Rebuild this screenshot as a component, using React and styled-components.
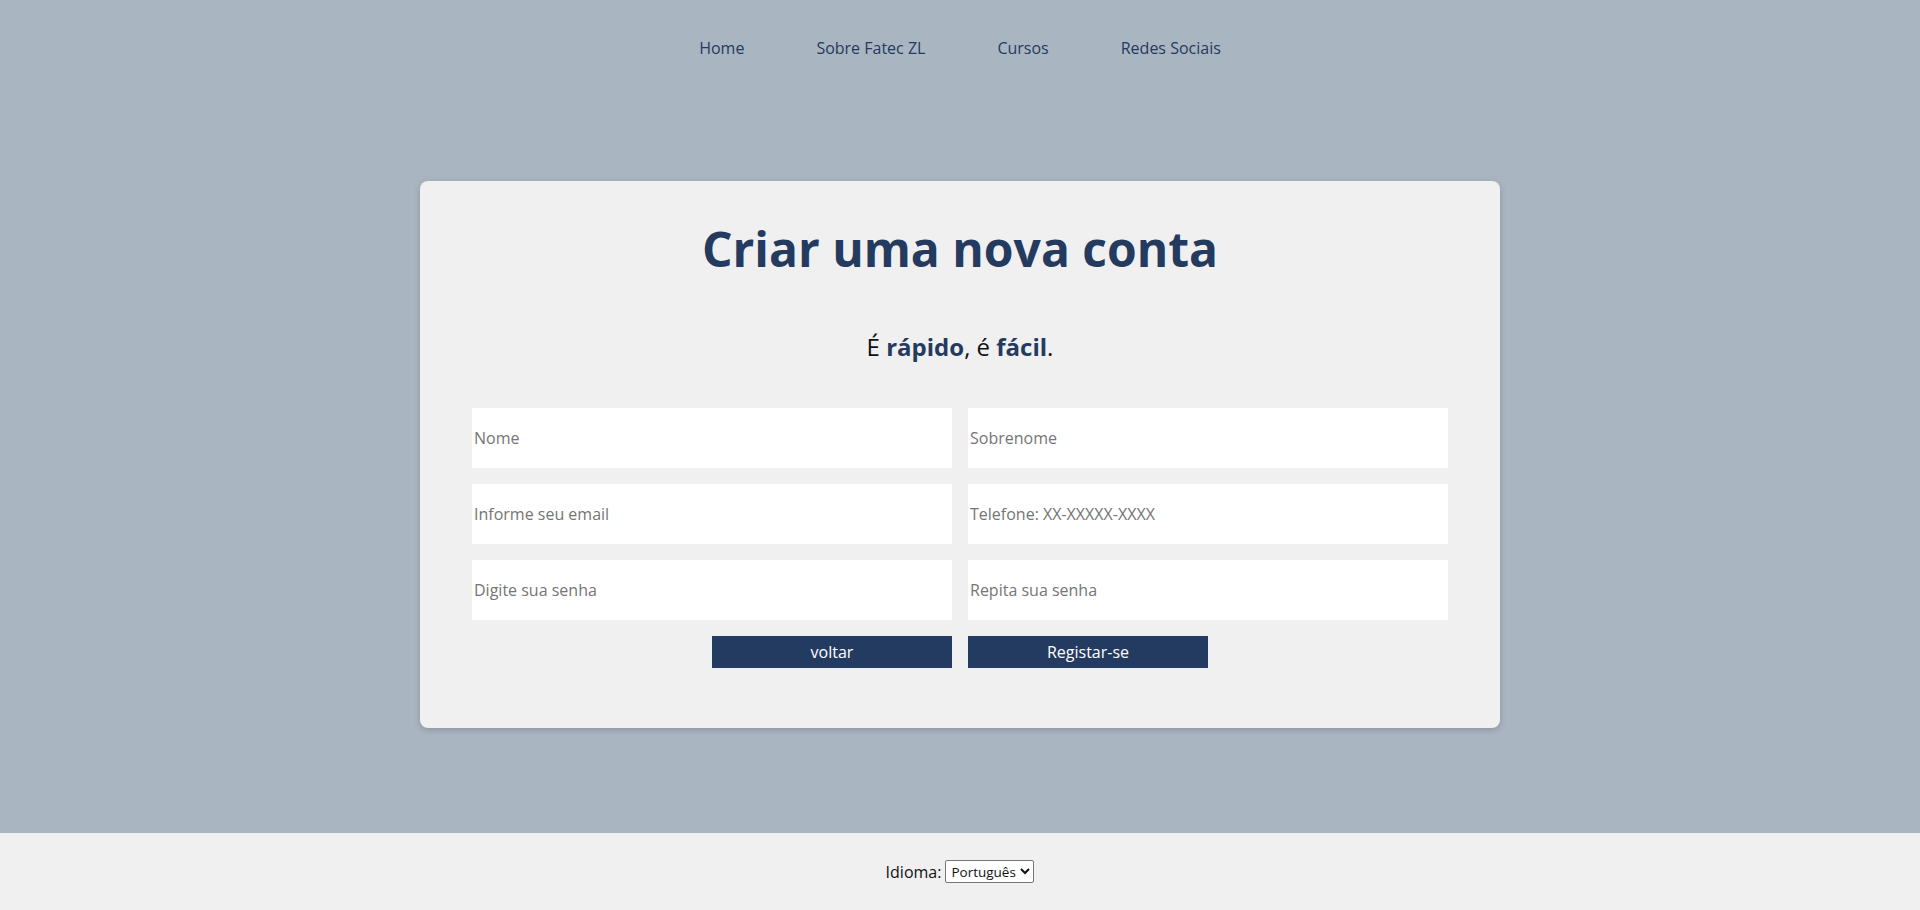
import React from "react";
import styled, { createGlobalStyle } from "styled-components";

const Global = createGlobalStyle`
  html, body { margin: 0; padding: 0; }
  body {
    background: #aab5c2;
    font-family: "Open Sans", "Noto Sans", sans-serif;
  }
  * { box-sizing: border-box; }
`;

const Page = styled.div`
  min-height: 910px;
  display: flex;
  flex-direction: column;
`;

const Header = styled.header`
  height: 96px;
  display: flex;
  align-items: center;
  justify-content: center;
`;

const Nav = styled.nav`
  display: flex;
  gap: 72px;
`;

const NavLink = styled.a`
  color: #243a5e;
  font-size: 16px;
  text-decoration: none;
  cursor: pointer;
`;

const Main = styled.main`
  display: flex;
  justify-content: center;
  padding-top: 85px;
`;

const Card = styled.section`
  width: 1080px;
  background: #f0f0f0;
  border-radius: 8px;
  box-shadow: 0 2px 6px rgba(0, 0, 0, 0.18);
  padding: 37px 52px 60px;
  display: flex;
  flex-direction: column;
  align-items: center;
`;

const Title = styled.h1`
  margin: 0;
  color: #243a5e;
  font-size: 48px;
  font-weight: 700;
  line-height: 1.3;
`;

const Subtitle = styled.p`
  margin: 51px 0 0;
  color: #111;
  font-size: 24px;
  line-height: 1.3;
  b { color: #243a5e; font-weight: 700; }
`;

const Form = styled.form`
  margin-top: 45px;
  width: 100%;
  display: grid;
  grid-template-columns: 1fr 1fr;
  gap: 16px;
`;

const Input = styled.input`
  height: 60px;
  border: none;
  background: #fff;
  padding: 0 2px;
  font-family: "Open Sans", "Noto Sans", sans-serif;
  font-size: 16px;
  color: #333;
  outline: none;
  &::placeholder { color: #757575; }
`;

const Button = styled.button`
  width: 240px;
  height: 32px;
  border: none;
  background: #243b61;
  color: #fff;
  font-family: "Open Sans", "Noto Sans", sans-serif;
  font-size: 16px;
  cursor: pointer;
  justify-self: ${(p) => (p.$side === "left" ? "end" : "start")};
`;

const Footer = styled.footer`
  margin-top: auto;
  height: 77px;
  background: #f0f0f0;
  display: flex;
  align-items: center;
  justify-content: center;
  gap: 4px;
  font-size: 16px;
  color: #111;
`;

const Select = styled.select`
  font-family: "Open Sans", "Noto Sans", sans-serif;
  font-size: 13.5px;
  padding: 0 1px;
  height: 23px;
  background: #fff;
  border: 1px solid #767676;
  border-radius: 2px;
  color: #111;
`;

export default function App() {
  return (
    <Page>
      <Global />
      <Header>
        <Nav>
          <NavLink>Home</NavLink>
          <NavLink>Sobre Fatec ZL</NavLink>
          <NavLink>Cursos</NavLink>
          <NavLink>Redes Sociais</NavLink>
        </Nav>
      </Header>
      <Main>
        <Card>
          <Title>Criar uma nova conta</Title>
          <Subtitle>
            É <b>rápido</b>, é <b>fácil</b>.
          </Subtitle>
          <Form onSubmit={(e) => e.preventDefault()}>
            <Input placeholder="Nome" />
            <Input placeholder="Sobrenome" />
            <Input placeholder="Informe seu email" />
            <Input placeholder="Telefone: XX-XXXXX-XXXX" />
            <Input type="password" placeholder="Digite sua senha" />
            <Input type="password" placeholder="Repita sua senha" />
            <Button type="button" $side="left">voltar</Button>
            <Button type="submit" $side="right">Registar-se</Button>
          </Form>
        </Card>
      </Main>
      <Footer>
        Idioma:
        <Select defaultValue="pt">
          <option value="pt">Português</option>
          <option value="en">English</option>
        </Select>
      </Footer>
    </Page>
  );
}
